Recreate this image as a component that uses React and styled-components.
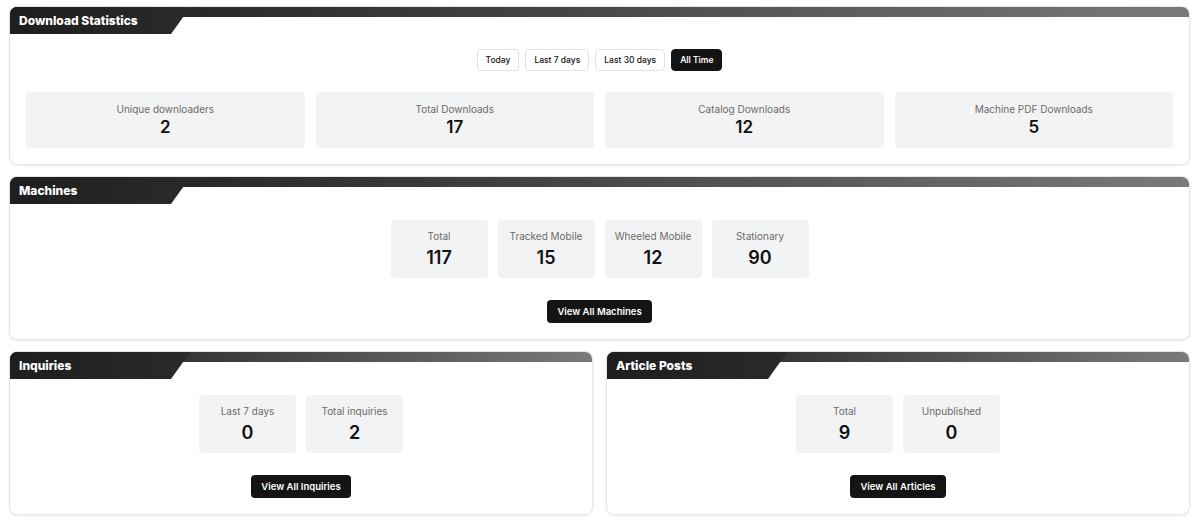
import React, { useState } from 'react'
import styled, { createGlobalStyle, css } from 'styled-components'

const GlobalStyle = createGlobalStyle`
    body {
        margin: 0;
        background: #fff;
        font-family: Inter, "Liberation Sans", sans-serif;
        color: #111;
    }
`

const Page = styled.div`
    display: grid;
    grid-template-columns: 1fr 1fr;
    gap: 11px 13px;
    padding: 6px 10px 6px 9px;
`

const Card = styled.section`
    grid-column: ${props => props.wide ? '1 / -1' : 'auto'};
    background: #fff;
    border: 1px solid #e6e6e6;
    border-radius: 8px;
    box-shadow: 0 1px 3px rgba(0, 0, 0, 0.08);
    overflow: hidden;
    display: flex;
    flex-direction: column;
    padding-bottom: 16px;
`

const Header = styled.header`
    height: 28px;
    margin: -1px -1px 0 -1px;
    background: linear-gradient(90deg, #1b1b1b 0%, #3a3a3a 35%, #7a7a7a 100%) top left / 100% 11px no-repeat;
`

const Tab = styled.div`
    width: 182px;
    height: 100%;
    background: linear-gradient(90deg, #1e1e1e, #2a2a2a);
    clip-path: polygon(0 0, 100% 0, calc(100% - 20px) 100%, 0 100%);
    color: #fff;
    font-size: 12px;
    font-weight: 800;
    display: flex;
    align-items: center;
    padding-left: 10px;
    box-sizing: border-box;
`

const Filters = styled.div`
    display: flex;
    justify-content: center;
    gap: 6px;
    margin-top: 15px;
`

const FilterButton = styled.button`
    height: 22px;
    padding: 0 8px;
    font-family: inherit;
    font-size: 8.5px;
    font-weight: 500;
    color: #111;
    background: #fff;
    border: 1px solid #e3e3e3;
    border-radius: 4px;
    cursor: pointer;
    ${props => props.active && css`
        background: #141414;
        border-color: #141414;
        color: #fff;
        font-weight: 600;
    `}
`

const StatGrid = styled.div`
    display: grid;
    grid-template-columns: repeat(4, 1fr);
    gap: 11px;
    padding: 0 16px;
    margin-top: 21px;
`

const StatRow = styled.div`
    display: flex;
    justify-content: center;
    gap: 10px;
    margin-top: 16px;
`

const StatBox = styled.div`
    background: #f2f3f5;
    border-radius: 4px;
    display: flex;
    flex-direction: column;
    align-items: center;
    box-sizing: border-box;
    ${props => props.small ? css`
        width: 97px;
        height: 58px;
        padding-top: 10px;
    ` : css`
        height: 56px;
        padding-top: 11px;
    `}
`

const StatLabel = styled.div`
    font-size: 10px;
    line-height: 13px;
    color: #6b6b6b;
`

const StatValue = styled.div`
    font-size: ${props => props.small ? '18px' : '17px'};
    line-height: 22px;
    font-weight: 600;
    color: #111;
    margin-top: ${props => props.small ? '4px' : '0'};
`

const ActionButton = styled.button`
    align-self: center;
    height: 23px;
    margin-top: 22px;
    padding: 0 10px;
    font-family: inherit;
    font-size: 9.5px;
    font-weight: 600;
    color: #fff;
    background: #141414;
    border: none;
    border-radius: 4px;
    cursor: pointer;
`

const ranges = ['Today', 'Last 7 days', 'Last 30 days', 'All Time']

const downloads = [
    ['Unique downloaders', 2],
    ['Total Downloads', 17],
    ['Catalog Downloads', 12],
    ['Machine PDF Downloads', 5],
]

function Panel({ title, wide, children }) {
    return (
        <Card wide={wide}>
            <Header><Tab>{title}</Tab></Header>
            {children}
        </Card>
    )
}

function SmallStats({ items }) {
    return (
        <StatRow>
            {items.map(([label, value]) => (
                <StatBox small key={label}>
                    <StatLabel>{label}</StatLabel>
                    <StatValue small>{value}</StatValue>
                </StatBox>
            ))}
        </StatRow>
    )
}

export default function App() {
    const [range, setRange] = useState('All Time')
    return (
        <>
            <GlobalStyle />
            <Page>
                <Panel title="Download Statistics" wide>
                    <Filters>
                        {ranges.map(r => (
                            <FilterButton key={r} active={r === range} onClick={() => setRange(r)}>{r}</FilterButton>
                        ))}
                    </Filters>
                    <StatGrid>
                        {downloads.map(([label, value]) => (
                            <StatBox key={label}>
                                <StatLabel>{label}</StatLabel>
                                <StatValue>{value}</StatValue>
                            </StatBox>
                        ))}
                    </StatGrid>
                </Panel>
                <Panel title="Machines" wide>
                    <SmallStats items={[['Total', 117], ['Tracked Mobile', 15], ['Wheeled Mobile', 12], ['Stationary', 90]]} />
                    <ActionButton>View All Machines</ActionButton>
                </Panel>
                <Panel title="Inquiries">
                    <SmallStats items={[['Last 7 days', 0], ['Total inquiries', 2]]} />
                    <ActionButton>View All Inquiries</ActionButton>
                </Panel>
                <Panel title="Article Posts">
                    <SmallStats items={[['Total', 9], ['Unpublished', 0]]} />
                    <ActionButton>View All Articles</ActionButton>
                </Panel>
            </Page>
        </>
    )
}
